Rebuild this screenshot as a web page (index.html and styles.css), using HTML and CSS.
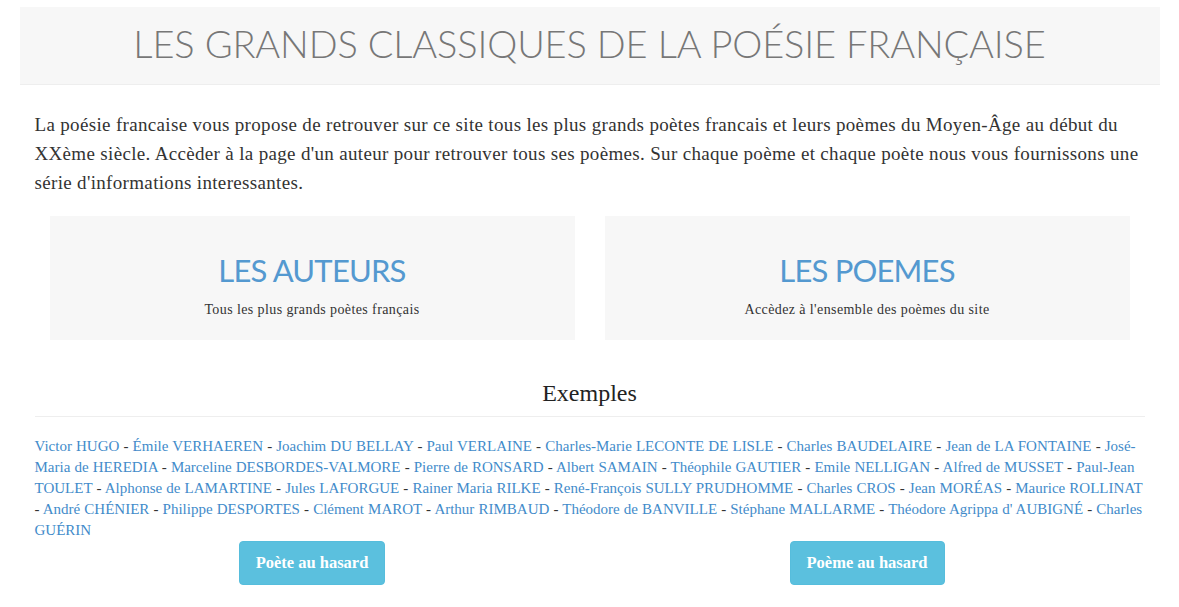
FILE: index.html
```html
<!DOCTYPE html>
<html lang="fr">
<head>
<meta charset="utf-8">
<title>La poésie française</title>
<link rel="stylesheet" href="styles.css">
</head>
<body>
<div class="container">
  <header class="site-header">
    <h1 class="site-title">LES GRANDS CLASSIQUES DE LA POÉSIE FRANÇAISE</h1>
  </header>
  <main class="content">
    <p class="intro">La poésie francaise vous propose de retrouver sur ce site tous les plus grands poètes francais et leurs poèmes du Moyen-Âge au début du XXème siècle. Accèder à la page d'un auteur pour retrouver tous ses poèmes. Sur chaque poème et chaque poète nous vous fournissons une série d'informations interessantes.</p>
    <div class="cards">
      <a class="card" href="#">
        <span class="card-title">LES AUTEURS</span>
        <span class="card-sub">Tous les plus grands poètes français</span>
      </a>
      <a class="card" href="#">
        <span class="card-title">LES POEMES</span>
        <span class="card-sub">Accèdez à l'ensemble des poèmes du site</span>
      </a>
    </div>
    <h2 class="examples-title">Exemples</h2>
    <p class="examples"><a href="#">Victor HUGO</a> - <a href="#">Émile VERHAEREN</a> - <a href="#">Joachim DU BELLAY</a> - <a href="#">Paul VERLAINE</a> - <a href="#">Charles-Marie LECONTE DE LISLE</a> - <a href="#">Charles BAUDELAIRE</a> - <a href="#">Jean de LA FONTAINE</a> - <a href="#">José-Maria de HEREDIA</a> - <a href="#">Marceline DESBORDES-VALMORE</a> - <a href="#">Pierre de RONSARD</a> - <a href="#">Albert SAMAIN</a> - <a href="#">Théophile GAUTIER</a> - <a href="#">Emile NELLIGAN</a> - <a href="#">Alfred de MUSSET</a> - <a href="#">Paul-Jean TOULET</a> - <a href="#">Alphonse de LAMARTINE</a> - <a href="#">Jules LAFORGUE</a> - <a href="#">Rainer Maria RILKE</a> - <a href="#">René-François SULLY PRUDHOMME</a> - <a href="#">Charles CROS</a> - <a href="#">Jean MORÉAS</a> - <a href="#">Maurice ROLLINAT</a> - <a href="#">André CHÉNIER</a> - <a href="#">Philippe DESPORTES</a> - <a href="#">Clément MAROT</a> - <a href="#">Arthur RIMBAUD</a> - <a href="#">Théodore de BANVILLE</a> - <a href="#">Stéphane MALLARME</a> - <a href="#">Théodore Agrippa d' AUBIGNÉ</a> - <a href="#">Charles GUÉRIN</a></p>
    <div class="actions">
      <div class="action"><a class="btn" href="#">Poète au hasard</a></div>
      <div class="action"><a class="btn" href="#">Poème au hasard</a></div>
    </div>
  </main>
</div>
</body>
</html>
```
FILE: styles.css
```css
html, body {
  margin: 0;
  padding: 0;
  background: #fff;
}
body {
  font-family: "Liberation Serif", "Times New Roman", serif;
  color: #333;
}
a {
  color: #428bca;
  text-decoration: none;
}
.container {
  width: 1140px;
  margin: 0 auto;
  padding-top: 7px;
}
.site-header {
  background: #f7f7f7;
  border-bottom: 1px solid #eeeeee;
  height: 78px;
  box-sizing: border-box;
  padding-bottom: 5px;
  display: flex;
  align-items: center;
  justify-content: center;
}
.site-title {
  margin: 0;
  font-family: "Lato", "Open Sans", sans-serif;
  font-weight: 300;
  font-size: 38px;
  letter-spacing: -0.15px;
  color: #777;
  line-height: 1;
}
.content {
  padding: 0 15px;
}
.intro {
  margin: 25px 0 0;
  font-size: 19px;
  letter-spacing: 0.33px;
  line-height: 29px;
}
.cards {
  display: grid;
  grid-template-columns: 1fr 1fr;
  gap: 30px;
  margin: 19px 15px 0;
}
.card {
  background: #f7f7f7;
  height: 124px;
  display: flex;
  flex-direction: column;
  align-items: center;
  justify-content: flex-start;
  padding-top: 37px;
  box-sizing: border-box;
}
.card-title {
  font-family: "Lato", "Open Sans", sans-serif;
  font-weight: 400;
  font-size: 31px;
  letter-spacing: -0.8px;
  line-height: 34px;
  color: #5499d0;
}
.card-sub {
  margin-top: 15px;
  font-size: 14px;
  letter-spacing: 0.4px;
  color: #333;
}
.examples-title {
  margin: 39px 0 0;
  padding-bottom: 9px;
  border-bottom: 1px solid #eeeeee;
  text-align: center;
  font-weight: 400;
  font-size: 24px;
  line-height: 28px;
  color: #222;
}
.examples {
  margin: 19px 0 0;
  font-size: 15px;
  word-spacing: 0.35px;
  line-height: 21px;
}
.actions {
  display: grid;
  grid-template-columns: 1fr 1fr;
  margin-top: 0;
}
.action {
  display: flex;
  justify-content: center;
}
.btn {
  display: inline-block;
  background: #5bc0de;
  border: 1px solid #56bddc;
  border-radius: 4px;
  color: #fff;
  font-weight: 700;
  font-size: 16.5px;
  line-height: 20px;
  padding: 11px 16px;
}
```
